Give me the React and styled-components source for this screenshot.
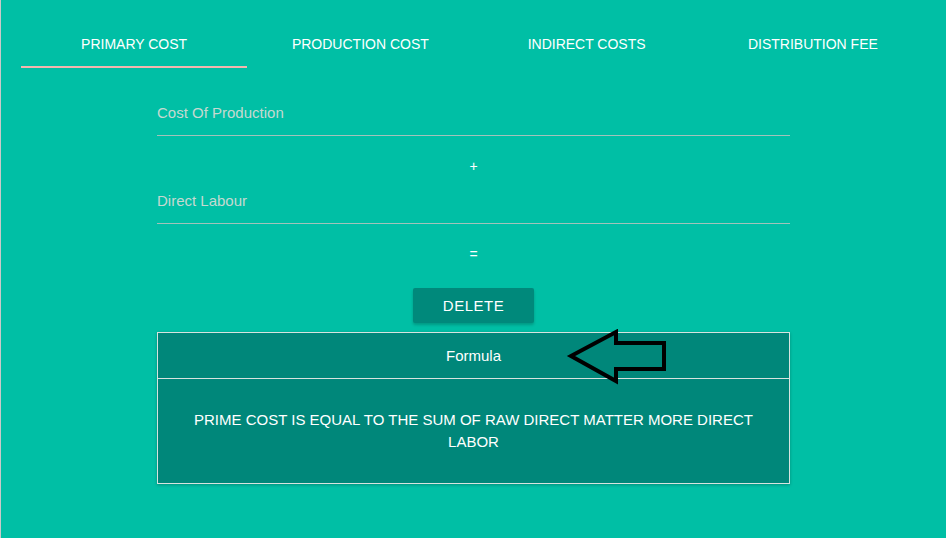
import styled, { createGlobalStyle } from "styled-components"
import { useState } from "react"

const GlobalStyle = createGlobalStyle`
  html, body {
    margin: 0;
    padding: 0;
    background: #00BFA5;
    font-family: "Liberation Sans", Arial, sans-serif;
  }
  * { box-sizing: border-box; }
`

const tabs = ['Primary cost', 'Production cost', 'Indirect costs', 'Distribution fee']

const Arrow = () => (
  <svg width="104" height="58" viewBox="0 0 104 58">
    <path
      d="M5 27 L50 3 L50 14 L98 14 L98 40 L50 40 L50 52 Z"
      fill="none"
      stroke="#000"
      strokeWidth="4"
      strokeLinejoin="miter"
    />
  </svg>
)

const App = () => {
  const [active, setActive] = useState(0)

  return (
    <Page>
      <GlobalStyle />
      <TabBar>
        {tabs.map((t, i) => (
          <Tab key={t} active={i === active ? 'true' : 'false'} onClick={() => setActive(i)}>
            {t}
          </Tab>
        ))}
      </TabBar>
      <Form>
        <Field>
          <Label>Cost Of Production</Label>
        </Field>
        <Operator>+</Operator>
        <Field>
          <Label>Direct Labour</Label>
        </Field>
        <Operator>=</Operator>
        <DeleteButton>Delete</DeleteButton>
        <Card>
          <CardHeader>
            Formula
            <ArrowWrap><Arrow /></ArrowWrap>
          </CardHeader>
          <CardBody>PRIME COST IS EQUAL TO THE SUM OF RAW DIRECT MATTER MORE DIRECT LABOR</CardBody>
        </Card>
      </Form>
    </Page>
  )
}

const Page = styled.div`
  width: 946px;
  height: 538px;
  border-left: 1px solid #c9c9c9;
  padding: 20px 20px 0 20px;
  overflow: hidden;
`

const TabBar = styled.div`
  display: grid;
  grid-template-columns: repeat(4, 1fr);
`

const Tab = styled.div`
  height: 48px;
  display: flex;
  align-items: center;
  justify-content: center;
  color: #fff;
  font-size: 14px;
  text-transform: uppercase;
  padding-top: 1px;
  border-bottom: 2px solid ${({active}) => active === 'true' ? '#f4b6ae' : 'transparent'};
  cursor: pointer;
`

const Form = styled.div`
  width: 633px;
  margin: 0 auto;
  padding-top: 12px;
  display: flex;
  flex-direction: column;
  align-items: center;
`

const Field = styled.div`
  width: 100%;
  height: 56px;
  display: flex;
  align-items: flex-end;
  padding-bottom: 14px;
  border-bottom: 1px solid #a3c2ba;
`

const Label = styled.span`
  color: #c6d9d1;
  font-size: 15px;
`

const Operator = styled.div`
  color: #fff;
  font-size: 14px;
  height: 32px;
  padding-top: 22px;
  line-height: 16px;
  text-align: center;
`

const DeleteButton = styled.button`
  margin-top: 32px;
  width: 121px;
  height: 35px;
  border: none;
  border-radius: 2px;
  background: #00897B;
  color: #fff;
  font-family: inherit;
  font-size: 15px;
  letter-spacing: 0.5px;
  text-transform: uppercase;
  box-shadow: 0 2px 3px rgba(0,0,0,0.2);
  cursor: pointer;
`

const Card = styled.div`
  width: 100%;
  margin-top: 9px;
  background: #00877A;
  border: 1px solid #d7e3df;
  box-shadow: 0 1px 3px rgba(0,0,0,0.25);
`

const CardHeader = styled.div`
  position: relative;
  height: 46px;
  display: flex;
  align-items: center;
  justify-content: center;
  color: #fff;
  font-size: 15px;
  border-bottom: 1px solid #d7e3df;
`

const ArrowWrap = styled.div`
  position: absolute;
  left: 408px;
  top: -4px;
  line-height: 0;
`

const CardBody = styled.div`
  height: 104px;
  padding: 30px 30px 0;
  text-align: center;
  color: #fff;
  font-size: 15px;
  line-height: 22px;
`

export default App
